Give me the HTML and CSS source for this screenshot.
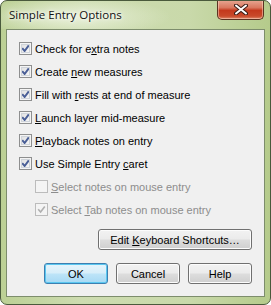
FILE: index.html
```html
<!DOCTYPE html>
<html>
  <head>
    <meta name="viewport" content="width=device-width,initial-scale=1.0">
    <title>Simple Entry Options</title>
    <link rel="stylesheet" href="styles.css">
  </head>
  <body>
    <div class="window">
      <div class="titlebar">
        <span class="title">Simple Entry Options</span>
        <span class="close">
          <svg width="14" height="11" viewBox="0 0 14 11">
            <path d="M2 1.5 L12 9.5 M12 1.5 L2 9.5" stroke="#3b1d16" stroke-width="4" stroke-linecap="round"/>
            <path d="M2 1.5 L12 9.5 M12 1.5 L2 9.5" stroke="#ffffff" stroke-width="2" stroke-linecap="round"/>
          </svg>
        </span>
      </div>

      <div class="client">
        <div class="options">
          <label class="opt"><span class="box on"></span><span>Check for e<u>x</u>tra notes</span></label>
          <label class="opt"><span class="box on"></span><span>Create <u>n</u>ew measures</span></label>
          <label class="opt"><span class="box on"></span><span>Fill with <u>r</u>ests at end of measure</span></label>
          <label class="opt"><span class="box on"></span><span><u>L</u>aunch layer mid-measure</span></label>
          <label class="opt"><span class="box on"></span><span><u>P</u>layback notes on entry</span></label>
          <label class="opt"><span class="box on"></span><span>Use Simple Entry <u>c</u>aret</span></label>
          <label class="opt sub off"><span class="box"></span><span><u>S</u>elect notes on mouse entry</span></label>
          <label class="opt sub off"><span class="box on"></span><span>Select <u>T</u>ab notes on mouse entry</span></label>
        </div>

        <div class="row-right">
          <button class="btn wide">Edit <u>K</u>eyboard Shortcuts…</button>
        </div>

        <div class="row-right buttons">
          <button class="btn default">OK</button>
          <button class="btn">Cancel</button>
          <button class="btn">Help</button>
        </div>
      </div>
    </div>
  </body>
</html>
```

FILE: styles.css
```css
body { margin: 0; font-family: "Liberation Sans", Arial, sans-serif; font-size: 11px; }

.window {
  width: 271px; height: 305px; box-sizing: border-box;
  border: 1px solid #4a5a3c; border-radius: 7px;
  background: linear-gradient(90deg, #bcd095 0%, #cddcb0 30%, #c9d9aa 70%, #b5cb8b 100%);
  padding: 0 5px 7px 5px;
  display: flex; flex-direction: column;
  overflow: hidden;
}

.titlebar {
  height: 28px; position: relative;
  background: radial-gradient(ellipse 100px 20px at 70px 16px, rgba(240,246,228,0.8), rgba(240,246,228,0) 100%);
  margin: 0 -5px; padding: 0 5px;
}
.title {
  display: block; padding: 6px 0 0 3px;
  font-family: "Open Sans", "Noto Sans", sans-serif; font-size: 11.5px; color: #111;
  text-shadow: 0 0 6px #fff, 0 0 3px #fff;
}
.close {
  position: absolute; top: -1px; right: 6px;
  width: 45px; height: 19px;
  border: 1px solid #5a3322; border-top: none;
  border-radius: 0 0 5px 5px;
  background: linear-gradient(#e8a894 0%, #d9785f 40%, #c4391d 55%, #c94a2b 85%, #de8a6c 100%);
  box-shadow: inset 0 0 0 1px rgba(255,220,200,0.5);
  display: flex; align-items: center; justify-content: center;
}

.client {
  flex: 1; background: #f0f0f0;
  border: 1px solid #7d8d6c;
  padding: 7px 12px 0 12px;
}

.options { display: flex; flex-direction: column; }
.opt { height: 23px; display: flex; align-items: center; color: #000; }
.opt.sub { padding-left: 16px; }
.opt.off { color: #8d8d8d; }

.box {
  width: 11px; height: 11px; margin-right: 3px; flex: none;
  border: 1px solid #8e8f8f;
  background: linear-gradient(135deg, #dcdcdc, #fbfbfb);
  box-shadow: inset 0 0 0 1px #f4f4f4, inset 0 0 0 2px #cfd4da;
}
.box.on {
  background-image: url("data:image/svg+xml;utf8,<svg xmlns='http://www.w3.org/2000/svg' width='11' height='11'><path d='M2.2 5.2 L4.6 8 L8.8 2.4' fill='none' stroke='%234a5f97' stroke-width='2'/></svg>"), linear-gradient(135deg, #dcdcdc, #fbfbfb);
}
.off .box { border-color: #bcbcbc; background: #f4f4f4; box-shadow: none; }
.off .box.on {
  background-image: url("data:image/svg+xml;utf8,<svg xmlns='http://www.w3.org/2000/svg' width='11' height='11'><path d='M2.2 5.2 L4.6 8 L8.8 2.4' fill='none' stroke='%23b0b0b0' stroke-width='1.6'/></svg>");
}

.row-right { display: flex; justify-content: flex-end; gap: 8px; margin-top: 8px; }
.buttons { margin-top: 13px; }

.btn {
  height: 21px; width: 64px; padding: 0;
  font-family: "Liberation Sans", Arial, sans-serif; font-size: 11px; color: #000;
  border: 1px solid #707070; border-radius: 3px;
  background: linear-gradient(#f2f2f2 0%, #ebebeb 48%, #dddddd 52%, #cfcfcf 100%);
  box-shadow: inset 0 0 0 1px #fcfcfc;
}
.btn.wide { width: 154px; }
.btn.default {
  border-color: #3c7fb1;
  background: linear-gradient(#e5f4fc 0%, #d7eef9 48%, #bde4f8 52%, #a6d9f4 100%);
  box-shadow: inset 0 0 0 1px #5ac7f0;
}
```
